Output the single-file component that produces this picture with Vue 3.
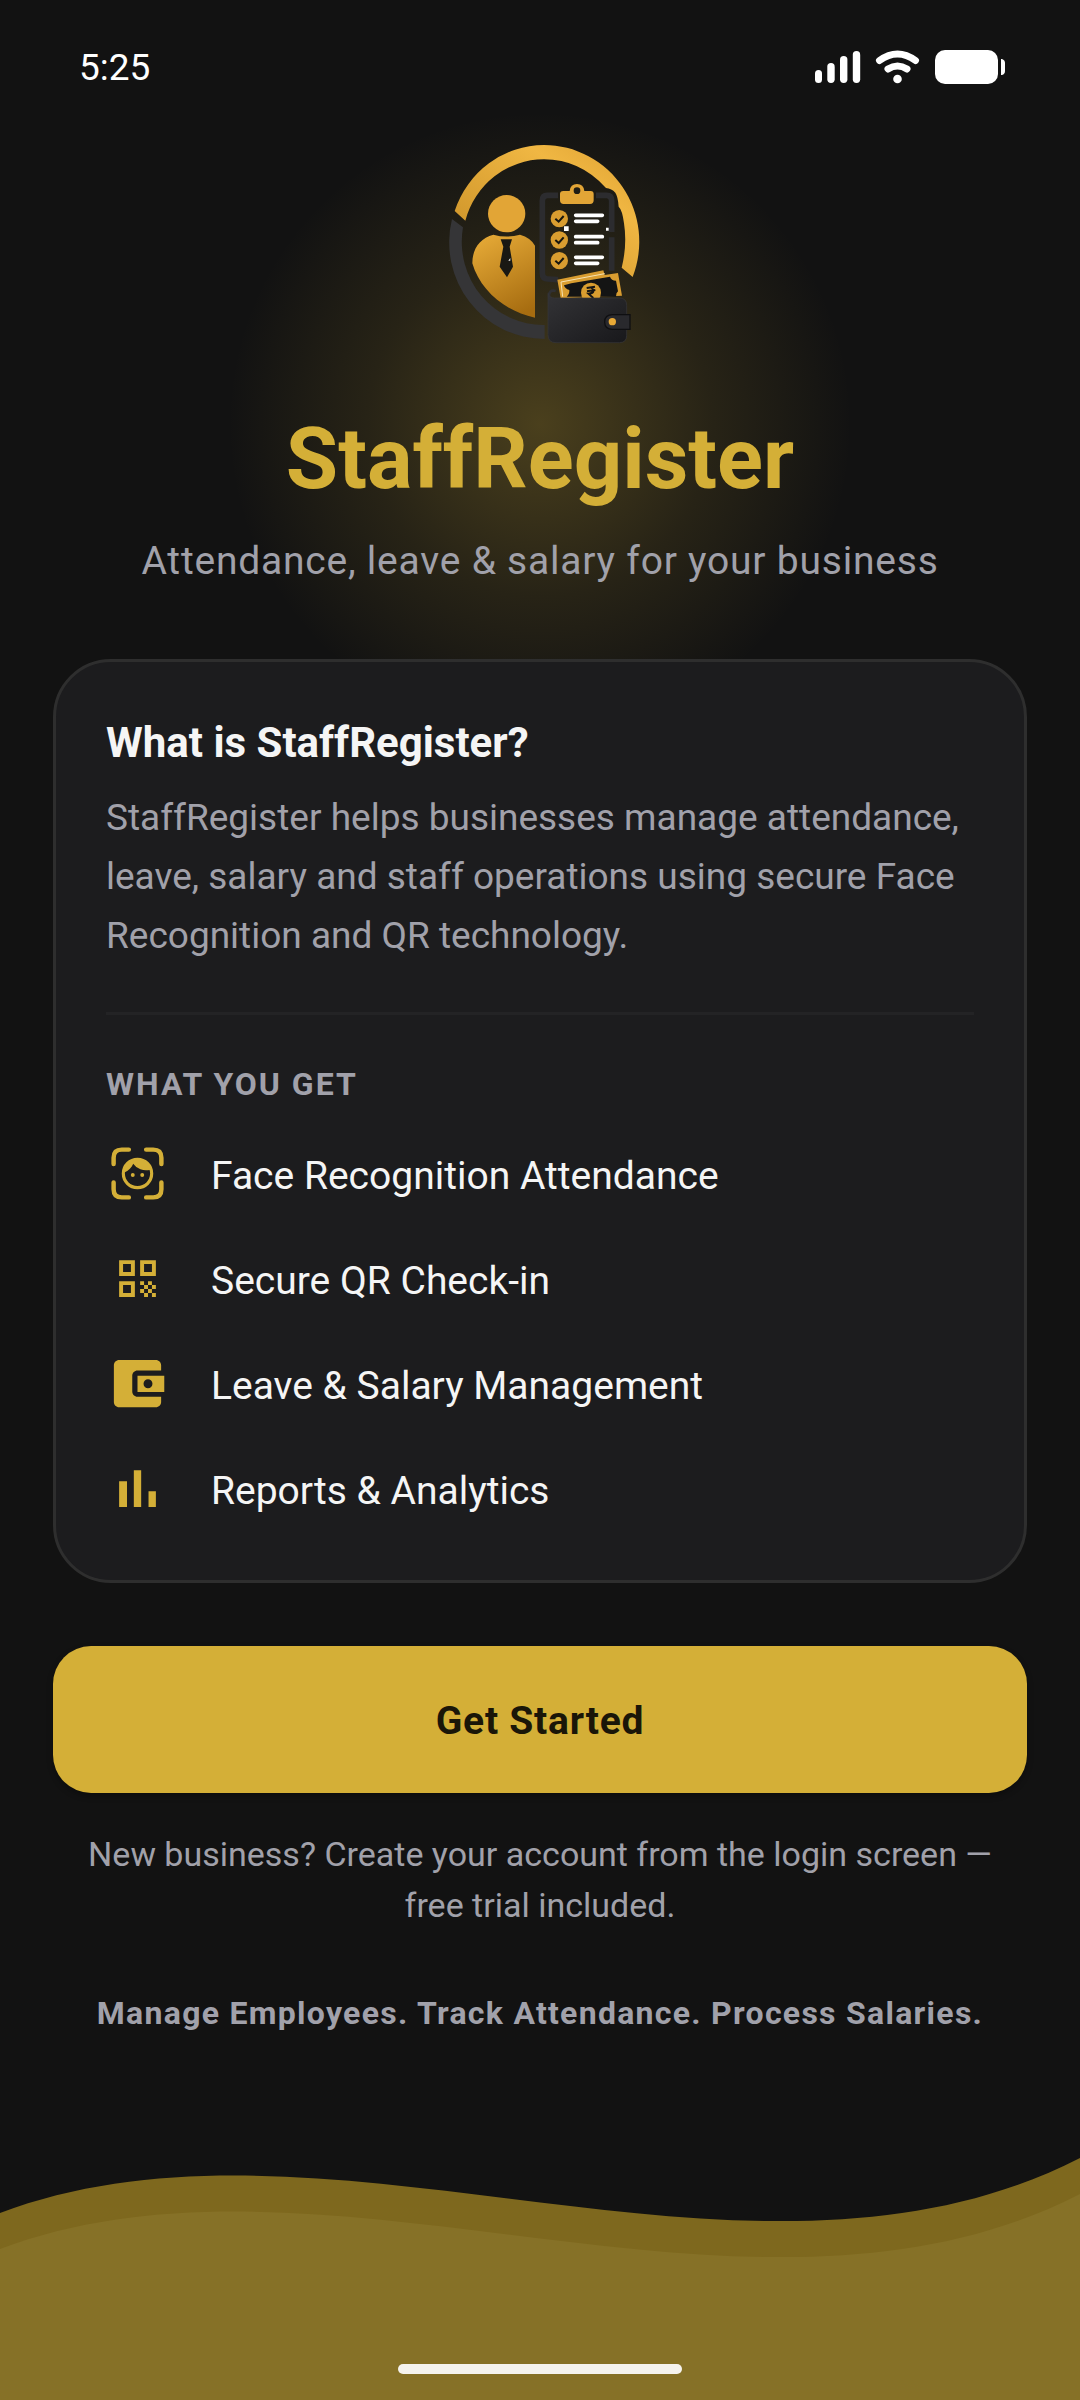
<template>
    <div class="screen">
        <header class="status-bar">
            <span>5:25</span>
            <svg class="status-icons" viewBox="0 0 190 34" aria-hidden="true">
                <g fill="#fff">
                    <rect x="0" y="20" width="7" height="13" rx="3.5" />
                    <rect x="12.3" y="13" width="7.4" height="20" rx="3.7" />
                    <rect x="25" y="6" width="7.4" height="27" rx="3.7" />
                    <rect x="37.8" y="1" width="7.4" height="32" rx="3.7" />
                    <circle cx="82.5" cy="29" r="4.3" />
                    <rect x="120" y="0" width="63" height="34" rx="10" />
                    <path d="M186 9h1q3 1 3 4v8q0 3-3 4h-1z" />
                </g>
                <g fill="none" stroke="#fff" stroke-width="7" stroke-linecap="round">
                    <path d="M64.5 10.5Q82.5-2.5 100.5 10.5" />
                    <path d="M73 19Q82.5 13 92 19" />
                </g>
            </svg>
        </header>

        <main class="content">
            <section class="hero">
                <svg class="logo" viewBox="-15 0 690 690" role="img" aria-label="StaffRegister logo">
                    <defs>
                        <linearGradient id="ring" x1="0" y1="1" x2="1" y2="0">
                            <stop offset="0" stop-color="#c48a22" />
                            <stop offset="0.7" stop-color="#f0b743" />
                            <stop offset="1" stop-color="#dc9f30" />
                        </linearGradient>
                        <linearGradient id="body" x1="0.3" y1="0" x2="0.7" y2="1">
                            <stop offset="0" stop-color="#e3a735" />
                            <stop offset="1" stop-color="#a66c10" />
                        </linearGradient>
                        <linearGradient id="leather" x1="0" y1="0" x2="1" y2="1">
                            <stop offset="0" stop-color="#333336" />
                            <stop offset="1" stop-color="#18181b" />
                        </linearGradient>
                    </defs>
                    <!-- Кольцо -->
                    <path fill="url(#ring)" d="M74 243A284 290 0 0 1 342 45A286 290 0 0 1 608 441L575 413Q592 345 582 280Q577 240 566 230Q564 200 556 188Q545 176 528 174Q450 88 342 88A244 250 0 0 0 106 272Z" />
                    <path fill="#353537" d="M66 267L99 292A245 250 0 0 0 344 585V627A287 290 0 0 1 66 267Z" />
                    <!-- Сотрудник -->
                    <circle cx="230" cy="251" r="56" fill="#e2a536" />
                    <path fill="url(#body)" d="M127 400C127 355 150 325 190 314Q230 325 270 314Q302 323 315 347V563C225 545 150 480 127 400Z" />
                    <path fill="#191813" d="M212 328H246L239 350L249 410L231 442L209 410L220 350Z" />
                    <path fill="#fff" d="M235 392L241 384V392Z" />
                    <!-- Планшет -->
                    <path fill="none" stroke="#2c2c2f" stroke-width="17" d="M384 196H352Q337 196 337 212V430Q337 447 354 447L384 449M498 196H530Q545 196 545 212V306M545 322V422" />
                    <path fill="#e2a536" fill-rule="evenodd" d="M400 183H419Q421 162 441 162T463 183H482Q491 183 491 192V211Q491 222 480 222H401Q390 222 390 211V192Q390 183 400 183ZM441 172A10 10 0 1 0 441 192A10 10 0 1 0 441 172Z" />
                    <g v-for="y in [266, 330, 392]" :key="y">
                        <circle cx="388" :cy="y" r="26" fill="#d99d30" />
                        <path :d="`M376 ${y}l10 9 15-17`" fill="none" stroke="#17160f" stroke-width="6" />
                        <path :d="`M437 ${y - 10}h80M437 ${y + 8}h66`" stroke="#fff" stroke-width="11" stroke-linecap="round" />
                    </g>
                    <path fill="#fff" d="M402 289h14v14h-14zM528 293h8v9h-8z" />
                    <!-- Кошелёк -->
                    <path fill="#d99d30" d="M382 449L520 421L524 435L564 429L576 497L392 505Z" />
                    <path fill="none" stroke="#f6e3b4" stroke-width="3" d="M398 500L393 456L524 431" />
                    <path fill="#141414" d="M424 460L540 440Q544 452 558 452L564 484Q558 488 558 500H410Q419 492 418 480Q404 476 402 466Z" />
                    <circle cx="483" cy="488" r="30" fill="#d99d30" />
                    <path fill="none" stroke="#141414" stroke-width="6" d="M470 474L495 470M471 484L496 480M484 472Q500 489 475 491L490 504" />
                    <path fill="none" stroke="#303033" stroke-width="8" d="M377 483Q356 478 357 500" />
                    <path fill="url(#leather)" stroke="#37373b" stroke-width="2" d="M354 490Q358 504 374 504H568Q590 504 590 526V616Q590 638 568 638H378Q354 638 354 614Z" />
                    <path fill="#29292d" stroke="#0f0f11" stroke-width="4" d="M600 554H548Q524 554 524 576T548 598H600Z" />
                    <circle cx="547" cy="575" r="11" fill="#e8a936" />
                </svg>
                <h1>StaffRegister</h1>
                <p>Attendance, leave &amp; salary for your business</p>
            </section>

            <section class="card">
                <h2>What is StaffRegister?</h2>
                <p class="description">
                    StaffRegister helps businesses manage attendance, leave, salary and staff operations
                    using secure Face Recognition and QR technology.
                </p>
                <hr />
                <h3>WHAT YOU GET</h3>
                <ul class="features">
                    <li v-for="feature of features" :key="feature.title">
                        <svg class="icon" viewBox="0 0 24 24" aria-hidden="true">
                            <path
                                v-if="feature.frame"
                                :d="feature.frame"
                                fill="none"
                                stroke="currentColor"
                                stroke-width="1.7"
                                stroke-linecap="round"
                            />
                            <path
                                :d="feature.icon"
                                :transform="feature.frame ? 'translate(4.8 4.8) scale(0.6)' : null"
                                fill="currentColor"
                                fill-rule="evenodd"
                            />
                        </svg>
                        <span>{{ feature.title }}</span>
                    </li>
                </ul>
            </section>

            <button class="start" type="button">Get Started</button>
            <p class="note">New business? Create your account from the login screen — free trial included.</p>
            <p class="tagline">Manage Employees. Track Attendance. Process Salaries.</p>
        </main>

        <footer class="footer">
            <svg class="wave" viewBox="0 0 1080 242" preserveAspectRatio="none" aria-hidden="true">
                <path fill="#7e681e" d="M0 55C330-69 750 169 1080 0V242H0Z" />
                <path fill="#867127" d="M0 91C330-33 750 205 1080 36V242H0Z" />
            </svg>
            <div class="home-indicator"></div>
        </footer>
    </div>
</template>

<script setup>
// Возможности приложения
const features = [
    {
        title: 'Face Recognition Attendance',
        frame: 'M8.7 2.9H6Q2.9 2.9 2.9 6V8.4M15.3 2.9H18Q21.1 2.9 21.1 6V8.4M2.9 15.4V18Q2.9 21.1 6 21.1H8.7M21.1 15.4V18Q21.1 21.1 18 21.1H15.3',
        icon: 'M9 11.75A1.25 1.25 0 1 0 9 14.25A1.25 1.25 0 1 0 9 11.75ZM15 11.75A1.25 1.25 0 1 0 15 14.25A1.25 1.25 0 1 0 15 11.75ZM12 2A10 10 0 1 0 12 22A10 10 0 1 0 12 2ZM12 20C7.59 20 4 16.41 4 12C4 11.71 4 11.42 4.05 11.14C6.41 10.09 8.28 8.16 9.26 5.77A9.974 9.974 0 0 0 19.67 9.74C19.88 10.45 20 11.21 20 12C20 16.41 16.41 20 12 20Z',
    },
    {
        title: 'Secure QR Check-in',
        icon: 'M5 5H11V11H5ZM6.5 6.5V9.5H9.5V6.5ZM13 5H19V11H13ZM14.5 6.5V9.5H17.5V6.5ZM5 13H11V19H5ZM6.5 14.5V17.5H9.5V14.5ZM13 13h1.5v1.5h-1.5zM16 13h1.5v1.5h-1.5zM14.5 14.5h1.5v1.5h-1.5zM17.5 14.5h1.5v1.5h-1.5zM13 16h1.5v1.5h-1.5zM16 16h1.5v1.5h-1.5zM14.5 17.5h1.5v1.5h-1.5zM17.5 17.5h1.5v1.5h-1.5z',
    },
    {
        title: 'Leave & Salary Management',
        icon: 'M21 18v1c0 1.1-.9 2-2 2H5c-1.11 0-2-.9-2-2V5c0-1.1.89-2 2-2h14c1.1 0 2 .9 2 2v2h-9c-1.11 0-2 .9-2 2v6c0 1.1.89 2 2 2h9zM12 15.2h10.2V9H12zm4-1.4a1.7 1.7 0 1 1 0-3.4 1.7 1.7 0 0 1 0 3.4z',
    },
    {
        title: 'Reports & Analytics',
        icon: 'M5 9.2h3V19H5zM10.6 5h2.8v14h-2.8zM16.2 13H19v6h-2.8z',
    },
];
</script>

<style>
body {
    background: #121212;
}
</style>

<style scoped>
.screen {
    min-height: 100vh;
    display: flex;
    flex-direction: column;
    background: #121212 radial-gradient(circle 312px at 50% 424px, rgba(212, 175, 55, 0.29), rgba(212, 175, 55, 0.11) 55%, rgba(212, 175, 55, 0)) no-repeat;
    color: #f5f5f5;
    font-family: Roboto, sans-serif;
}

h1, h2, h3, p, ul {
    margin: 0;
    padding: 0;
}

.status-bar {
    height: 130px;
    padding: 4px 75px 0 79px;
    display: flex;
    justify-content: space-between;
    align-items: center;
    box-sizing: border-box;
    color: #fff;
    font-size: 37px;
}

.status-icons {
    width: 190px;
    height: 34px;
}

.content {
    padding: 0 53px 48px;
    display: flex;
    flex-direction: column;
}

.hero {
    display: flex;
    flex-direction: column;
    align-items: center;
    text-align: center;
}

.logo {
    width: 230px;
    height: 230px;
}

.hero h1 {
    margin-top: 50px;
    color: #d4af37;
    font-size: 85px;
    line-height: 98px;
    font-weight: 700;
}

.hero p {
    margin-top: 30px;
    color: #a1a1aa;
    font-size: 39px;
    line-height: 46px;
    letter-spacing: 0.02em;
}

.card {
    margin-top: 75px;
    padding: 56px 50px 60px;
    border: 3px solid #2e2e2e;
    border-radius: 58px;
    background: #1c1c1e;
}

.card h2 {
    font-size: 42px;
    line-height: 50px;
    font-weight: 700;
}

.description {
    margin-top: 20px;
    color: #a1a1aa;
    font-size: 37px;
    line-height: 59px;
}

.card hr {
    height: 3px;
    margin: 47px 0 50px;
    border: none;
    background: #232325;
}

.card h3 {
    color: #a1a1aa;
    font-size: 32px;
    line-height: 38px;
    font-weight: 700;
    letter-spacing: 2px;
}

.features {
    margin-top: 39px;
    display: flex;
    flex-direction: column;
    gap: 42px;
    list-style: none;
}

.features li {
    display: flex;
    align-items: center;
    gap: 42px;
    font-size: 39px;
    line-height: 46px;
}

.features span {
    padding-top: 4px;
}

.icon {
    width: 63px;
    height: 63px;
    flex-shrink: 0;
    color: #d4af37;
}

.start {
    min-height: 147px;
    margin-top: 63px;
    padding-top: 4px;
    border: none;
    border-radius: 38px;
    background: #d4af37;
    box-shadow: 0 3px 6px #00000050;
    color: #1a1608;
    font-family: inherit;
    font-size: 39px;
    font-weight: 700;
    letter-spacing: 0.02em;
}

.note {
    margin-top: 36px;
    padding: 0 20px;
    color: #a1a1aa;
    font-size: 34px;
    line-height: 51px;
    text-align: center;
}

.tagline {
    margin-top: 63px;
    color: #a1a1aa;
    font-size: 32px;
    line-height: 38px;
    font-weight: 700;
    letter-spacing: 0.04em;
    text-align: center;
}

.footer {
    position: relative;
    min-height: 242px;
    margin-top: auto;
    padding-bottom: 26px;
    display: flex;
    justify-content: center;
    align-items: flex-end;
    box-sizing: border-box;
}

.wave {
    position: absolute;
    inset: 0;
    width: 100%;
    height: 100%;
}

.home-indicator {
    position: relative;
    width: 284px;
    height: 10px;
    border-radius: 5px;
    background: #f5f3ee;
}
</style>
